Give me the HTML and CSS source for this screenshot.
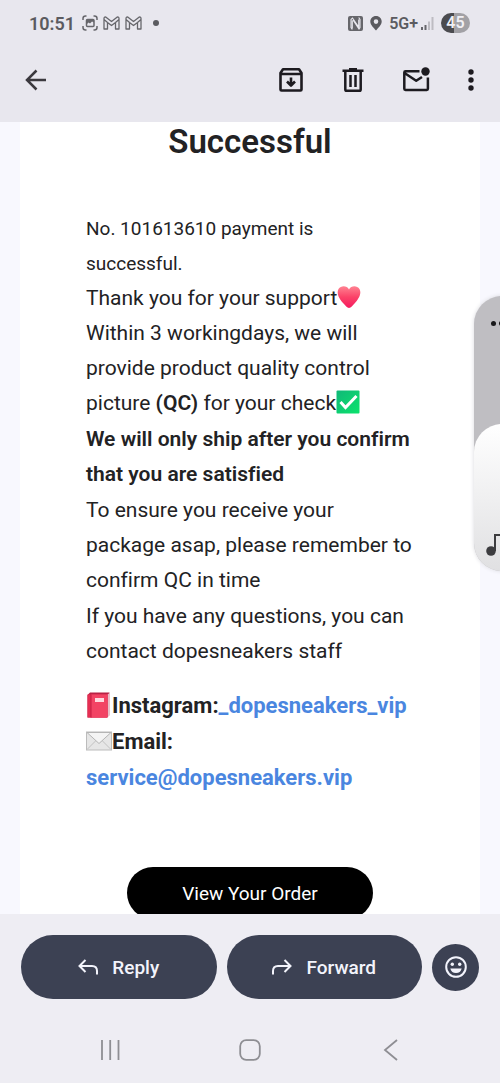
FILE: index.html
```html
<!DOCTYPE html>
<html lang="en">
<head>
<meta charset="utf-8">
<meta name="viewport" content="width=device-width, initial-scale=1">
<title>Mail</title>
<link rel="stylesheet" href="styles.css">
</head>
<body>
<div class="screen">
  <header class="top">
    <div class="status">
      <span class="clock">10:51</span>
      <svg class="s-icon" width="16" height="16" viewBox="0 0 16 16" fill="none" stroke="#66666b" stroke-width="1.5"><path d="M1 5V3.5Q1 1 3.500 1H4.500M11.500 1h1Q15 1 15 3.500V5M15 11v1.500Q15 15 12.500 15h-1M4.500 15h-1Q1 15 1 12.500V11"/><rect x="4.500" y="4.500" width="7.500" height="7" rx="1"/><path d="M4.500 4.500h7.500v3L10 6.500 8 8.500 6.500 7.500 4.500 9.500z" fill="#66666b" stroke="none"/></svg>
      <svg class="s-icon" width="17" height="14" viewBox="0 0 17 14" fill="none" stroke="#66666b" stroke-width="1.300" stroke-linejoin="round"><path d="M1 2.500Q1 .5 3 1.200L8.500 5.500 14 1.200Q16 .5 16 2.500V13h-3.500V6.500L8.500 9.600 4.500 6.500V13H1zM1 3.500l3.500 3M16 3.500l-3.500 3"/></svg>
      <svg class="s-icon" width="17" height="14" viewBox="0 0 17 14" fill="none" stroke="#66666b" stroke-width="1.300" stroke-linejoin="round"><path d="M1 2.500Q1 .5 3 1.200L8.500 5.500 14 1.200Q16 .5 16 2.500V13h-3.500V6.500L8.500 9.600 4.500 6.500V13H1zM1 3.500l3.500 3M16 3.500l-3.500 3"/></svg>
      <span class="more-dot"></span>
      <span class="status-right">
        <svg width="15" height="15" viewBox="0 0 15 15"><rect width="15" height="15" rx="2" fill="#66666b"/><path d="M4.300 13.500L3 11.500V3.500L4.500 2 10.700 11V3.500M4.300 4.500V12.500M10.700 1.500L12 3.500v8l-1 1.500L5 4" fill="none" stroke="#e8e7ee" stroke-width="1.100"/></svg>
        <svg class="pin" width="12" height="15" viewBox="0 0 12 15"><path fill="#5b5b60" fill-rule="evenodd" d="M6 0C2.500 0 .3 2.500.3 5.500.3 9 3.500 11.500 6 14.500 8.500 11.500 11.700 9 11.700 5.500 11.700 2.500 9.500 0 6 0zm0 3.300a2.300 2.300 0 1 1 0 4.600 2.300 2.300 0 0 1 0-4.600z"/></svg>
        <span class="net">5G+</span>
        <svg width="13" height="13" viewBox="0 0 13 13"><path d="M0 10h2v3H0zM3.500 8h2v5h-2z" fill="#66666b"/><path d="M7 4.500h2V13H7zM10.500 0h2v13h-2z" fill="#bdbcc2"/></svg>
        <span class="battery">45</span>
      </span>
    </div>
    <nav class="toolbar" aria-label="Message actions">
      <button class="icon-btn back" aria-label="Back"><svg width="22" height="22" viewBox="0 0 22 22" fill="none" stroke="#3b393e" stroke-width="2.500"><path d="M21 11H2.500M11.500 1.500L2 11l9.500 9.500"/></svg></button>
      <button class="icon-btn" aria-label="Archive"><svg width="26" height="26" viewBox="0 0 26 26" fill="none" stroke="#1d1b20" stroke-width="2.600" stroke-linejoin="round"><path d="M2.500 6L5 2.300h16L23.500 6v16.500q0 1-1 1h-19q-1 0-1-1zM2.500 7h21"/><path d="M13 10.500v7M9 14.500l4 4 4-4"/></svg></button>
      <button class="icon-btn" aria-label="Delete"><svg width="22" height="26" viewBox="0 0 22 26" fill="none" stroke="#1d1b20" stroke-width="2.500"><path d="M.5 3.700h21M7 2.300h8M3.300 4v18.500q0 1.300 1.300 1.300h12.800q1.300 0 1.300-1.300V4M8.500 8v12M13.500 8v12"/></svg></button>
      <button class="icon-btn" aria-label="Mark as unread"><svg width="28" height="26" viewBox="0 0 28 26" fill="none" stroke="#1d1b20" stroke-width="2.500" stroke-linejoin="round"><path d="M17.500 4.300H3.500q-1.200 0-1.200 1.200v16.200q0 1.200 1.200 1.200h21.200q1.200 0 1.200-1.200V10.500M2.500 6l11.700 7.800L20 10"/><circle cx="23.500" cy="4.500" r="4.200" fill="#1d1b20" stroke="none"/></svg></button>
      <button class="icon-btn more" aria-label="More options"><svg width="6" height="22" viewBox="0 0 6 22" fill="#1d1b20"><circle cx="3" cy="3" r="2.700"/><circle cx="3" cy="11" r="2.700"/><circle cx="3" cy="19" r="2.700"/></svg></button>
    </nav>
  </header>

  <main class="mail">
    <article class="card">
      <h1>Successful</h1>
      <div class="message">
        <p><span class="lead">No. 101613610 payment is<br>successful.</span><br>
        Thank you for your support<svg class="emoji" width="24" height="24" viewBox="0 0 24 24" role="img" aria-label="Heart"><defs><linearGradient id="heart" x2="0" y2="1"><stop offset="0" stop-color="#ff8291"/><stop offset=".5" stop-color="#fb4268"/><stop offset="1" stop-color="#f51b60"/></linearGradient></defs><path fill="url(#heart)" d="M12 4.500C10 .5 4 .3 1.500 4-1 8.500 2.500 14.500 6.500 18.500 8.500 20.500 10 23 12 23s3.500-2.500 5.500-4.500C21.500 14.500 25 8.500 22.500 4 20 .3 14 .5 12 4.500z"/></svg><br>
        Within 3 workingdays, we will<br>provide product quality control<br>picture <b>(QC)</b> for your check<svg class="emoji" width="24" height="24" viewBox="0 0 24 24" role="img" aria-label="Check"><defs><linearGradient id="tick" x2="1" y2="1"><stop offset="0" stop-color="#10b878"/><stop offset="1" stop-color="#0be36c"/></linearGradient></defs><rect x=".5" y=".5" width="23" height="23" rx="1" fill="url(#tick)"/><path d="M4.500 12l5 5.500L20.500 6" fill="none" stroke="#fff" stroke-width="3"/></svg></p>
        <p><b>We will only ship after you confirm that you are satisfied</b></p>
        <p>To ensure you receive your<br>package asap, please remember to confirm QC in time</p>
        <p>If you have any questions, you can contact dopesneakers staff</p>
      </div>
      <div class="contact">
        <div><svg class="emoji" width="26" height="26" viewBox="0 0 26 26" role="img" aria-label="Book"><path d="M1.500 3L4 .5h19.500V23L21 25.500H1.500z" fill="#b92245"/><path d="M21.500 2.500L24 .8V23l-2.500 2z" fill="#e8bfc9"/><path d="M1.500 2.500h20v23h-20z" fill="#e62e52"/><path d="M5 2.500h16.500v23H5z" fill="#f24364"/><path d="M5 2.500v23" stroke="#c41f42"/><rect x="9" y="6" width="9" height="4" fill="#ffd9df"/></svg>Instagram:<a href="#instagram">_dopesneakers_vip</a></div>
        <div><svg class="emoji" width="26" height="26" viewBox="0 0 26 26" role="img" aria-label="Envelope"><rect x=".5" y="4" width="25" height="18" fill="#e6e6e6" stroke="#bcbcbc"/><path d="M1 21.500L10 12.500M25 21.500l-9-9" stroke="#c2c2c2"/><path d="M1 4.500l12 11 12-11z" fill="#f4f4f4" stroke="#b5b5b5"/></svg>Email:</div>
        <div><a href="mailto:service@dopesneakers.vip">service@dopesneakers.vip</a></div>
      </div>
      <button class="order">View Your Order</button>
    </article>
  </main>

  <footer class="bottom">
    <div class="actions">
      <button class="pill"><svg width="20" height="16" viewBox="0 0 20 16" fill="none" stroke="#f3f4fc" stroke-width="2"><path d="M7.500 1L1.500 7l6 6M1.500 7H14q5 0 5 5v3.500"/></svg>Reply</button>
      <button class="pill"><svg width="20" height="16" viewBox="0 0 20 16" fill="none" stroke="#f3f4fc" stroke-width="2"><path d="M12.500 1l6 6-6 6M18.500 7H6q-5 0-5 5v3.500"/></svg>Forward</button>
      <button class="react" aria-label="Add reaction"><svg width="22" height="22" viewBox="0 0 22 22"><circle cx="11" cy="11" r="9.800" fill="none" stroke="#f3f4fc" stroke-width="2"/><circle cx="7.300" cy="8.300" r="1.700" fill="#f3f4fc"/><circle cx="14.700" cy="8.300" r="1.700" fill="#f3f4fc"/><path d="M5.300 12.500h11.400Q15.500 17 11 17t-5.700-4.500z" fill="#f3f4fc"/></svg></button>
    </div>
    <nav class="system" aria-label="System">
      <button class="icon-btn" aria-label="Recents"><svg width="22" height="22" viewBox="0 0 22 22" stroke="#8e8e93" stroke-width="1.800"><path d="M3 1v20M11.200 1v20M19.500 1v20"/></svg></button>
      <button class="icon-btn" aria-label="Home"><svg width="22" height="22" viewBox="0 0 22 22" fill="none" stroke="#8e8e93" stroke-width="1.800"><rect x="1.200" y="1.200" width="19.600" height="19.600" rx="6"/></svg></button>
      <button class="icon-btn" aria-label="Back"><svg width="22" height="22" viewBox="0 0 22 22" fill="none" stroke="#8e8e93" stroke-width="1.800"><path d="M18 1L6 11l12 10"/></svg></button>
    </nav>
  </footer>

  <aside class="volume" aria-label="Volume">
    <span class="dots"><i></i><i></i></span>
    <div class="level"><svg width="24" height="24" viewBox="0 0 24 24" fill="#3c3c3f"><circle cx="5" cy="18" r="4.800"/><circle cx="19" cy="15.500" r="4.500"/><path d="M8 18V1h15.500v14h-2V3H10v15z"/></svg></div>
  </aside>
</div>
</body>
</html>
```
FILE: styles.css
```css
* { box-sizing: border-box; }

body {
  margin: 0;
  font-family: Roboto, "Liberation Sans", sans-serif;
  font-variant-ligatures: none;
  color: #222224;
}

button {
  border: 0;
  padding: 0;
  font: inherit;
  cursor: pointer;
}

svg { display: block; flex: none; }
p, h1 { margin: 0; }
b { font-weight: 600; }

.screen {
  position: relative;
  display: flex;
  flex-direction: column;
  height: 100vh;
  overflow: hidden;
  background: #f8f8fe;
}

.top { flex: none; background: #e8e7ee; }

.status {
  display: flex;
  align-items: center;
  height: 46px;
  padding: 0 30px 0 29px;
  color: #5b5b60;
  font-weight: 600;
}

.clock { margin-right: 7px; font-size: 18px; }
.s-icon { margin-right: 5px; }

.more-dot {
  width: 6px;
  height: 6px;
  margin-left: 6px;
  border-radius: 50%;
  background: #5b5b60;
}

.status-right {
  display: flex;
  align-items: center;
  gap: 5px;
  margin-left: auto;
}

.pin { margin: 0 2px; }
.net { margin-right: -2px; font-size: 16px; }

.battery {
  width: 29px;
  margin-left: 2px;
  border-radius: 10px;
  background: linear-gradient(90deg, #4b4b4f 45%, #a2a1a6 45%);
  color: #f1f0f5;
  font-size: 16px;
  line-height: 20px;
  text-align: center;
}

.toolbar {
  display: flex;
  align-items: center;
  gap: 38px;
  height: 76px;
  padding: 0 26px 8px 25px;
}

.icon-btn { background: none; }
.back { margin-right: auto; }

.mail {
  flex: 1;
  min-height: 0;
  overflow: hidden;
  padding: 0 20px;
}

.card {
  min-height: 100%;
  padding: 0 66px;
  background: #fff;
}

.card h1 {
  font-size: 33px;
  font-weight: 600;
  line-height: 40px;
  text-align: center;
}

.message {
  display: flex;
  flex-direction: column;
  gap: 1px;
  margin: 49px -6px 0 0;
  font-size: 21px;
  line-height: 35px;
}

.lead { font-size: 19px; }

.emoji {
  display: inline-block;
  vertical-align: middle;
  margin-top: -4px;
}

.contact {
  margin: 19px -6px 0 0;
  font-size: 22px;
  font-weight: 700;
  line-height: 36px;
}

.contact a { color: #4a86e0; text-decoration: none; }

.order {
  display: block;
  width: 75%;
  height: 52px;
  margin: 71px auto 0;
  border-radius: 26px;
  background: #000;
  color: #fff;
  font-size: 19px;
}

.bottom { flex: none; background: #eeedf3; }

.actions {
  display: flex;
  align-items: center;
  gap: 10px;
  padding: 21px 21px 0;
}

.pill {
  display: flex;
  flex: 1;
  align-items: center;
  justify-content: center;
  gap: 14px;
  height: 64px;
  border-radius: 32px;
  background: #3c4153;
  color: #f3f4fc;
  font-size: 19px;
  font-weight: 500;
}

.react {
  display: grid;
  place-items: center;
  width: 47px;
  height: 47px;
  border-radius: 50%;
  background: #3c4153;
}

.system {
  display: flex;
  align-items: center;
  justify-content: space-between;
  height: 84px;
  padding: 18px 99px 0;
}

.volume {
  position: absolute;
  top: 296px;
  right: -30px;
  display: flex;
  flex-direction: column;
  justify-content: space-between;
  width: 56px;
  height: 275px;
  overflow: hidden;
  border-radius: 28px;
  background: #bfbec2;
  box-shadow: 0 0 4px #d8d8dd;
}

.dots { display: flex; gap: 3px; padding: 25px 17px; }

.dots i {
  width: 5px;
  height: 5px;
  border-radius: 50%;
  background: #19191b;
}

.level {
  display: flex;
  align-items: flex-end;
  height: 147px;
  padding: 0 12px 14px;
  border-radius: 28px 28px 0 0;
  background: linear-gradient(#fff, #e0e0e2);
}
```
